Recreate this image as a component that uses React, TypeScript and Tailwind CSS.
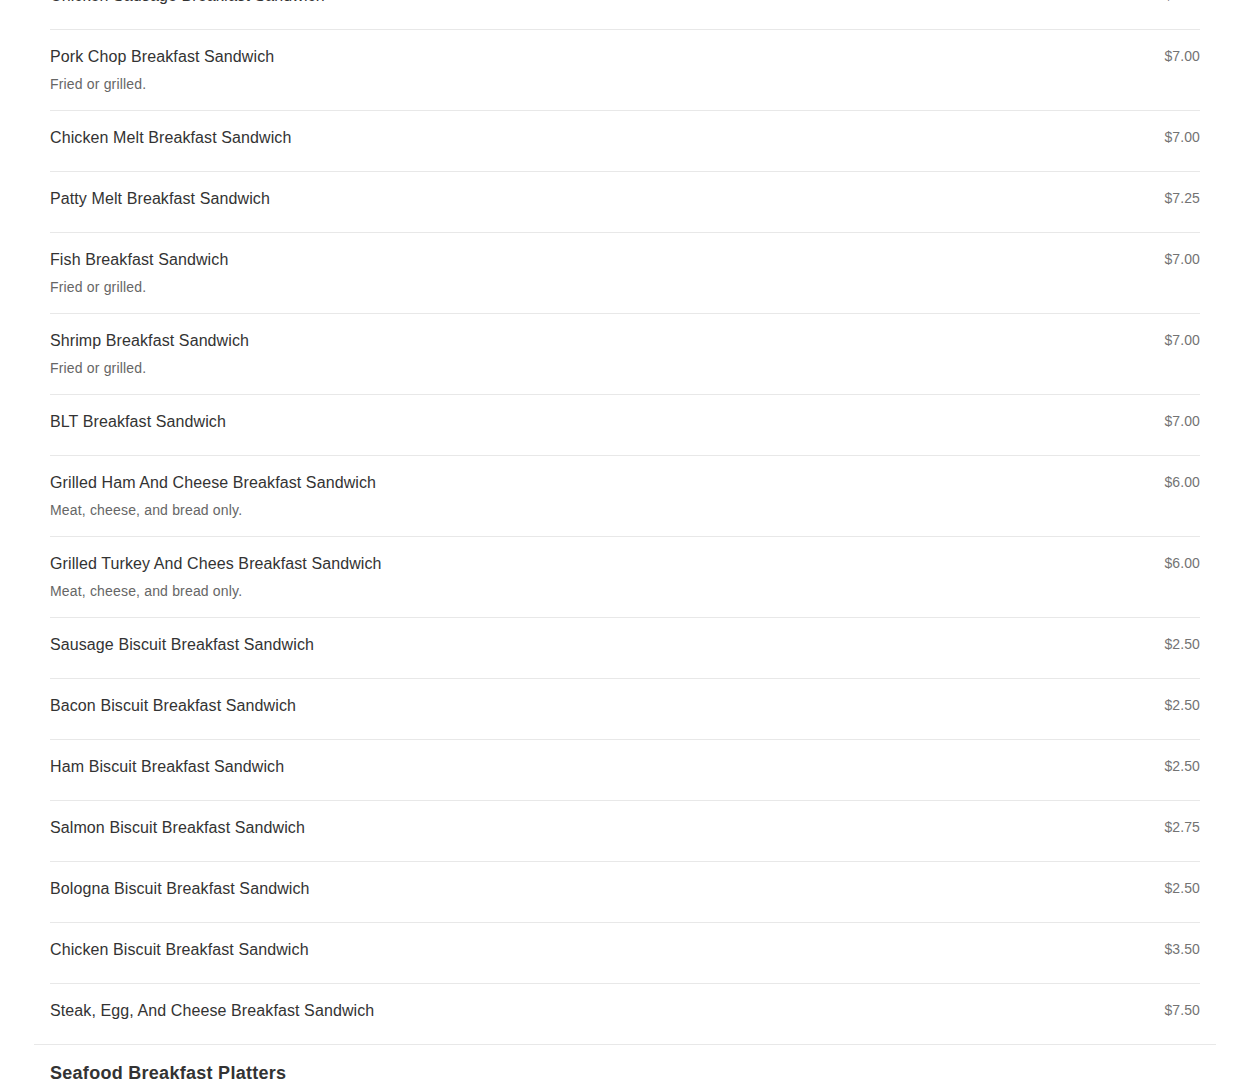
type Item = { name: string; price: string; desc?: string };

const grilled = "Fried or grilled.";
const plain = "Meat, cheese, and bread only.";

// Breakfast sandwiches (list is scrolled, first row sits above the fold)
const sandwiches: Item[] = [
  { name: "Chicken Sausage Breakfast Sandwich", price: "$7.00" },
  { name: "Pork Chop Breakfast Sandwich", price: "$7.00", desc: grilled },
  { name: "Chicken Melt Breakfast Sandwich", price: "$7.00" },
  { name: "Patty Melt Breakfast Sandwich", price: "$7.25" },
  { name: "Fish Breakfast Sandwich", price: "$7.00", desc: grilled },
  { name: "Shrimp Breakfast Sandwich", price: "$7.00", desc: grilled },
  { name: "BLT Breakfast Sandwich", price: "$7.00" },
  { name: "Grilled Ham And Cheese Breakfast Sandwich", price: "$6.00", desc: plain },
  { name: "Grilled Turkey And Chees Breakfast Sandwich", price: "$6.00", desc: plain },
  { name: "Sausage Biscuit Breakfast Sandwich", price: "$2.50" },
  { name: "Bacon Biscuit Breakfast Sandwich", price: "$2.50" },
  { name: "Ham Biscuit Breakfast Sandwich", price: "$2.50" },
  { name: "Salmon Biscuit Breakfast Sandwich", price: "$2.75" },
  { name: "Bologna Biscuit Breakfast Sandwich", price: "$2.50" },
  { name: "Chicken Biscuit Breakfast Sandwich", price: "$3.50" },
  { name: "Steak, Egg, And Cheese Breakfast Sandwich", price: "$7.50" },
];

function MenuRow({ item, last }: { item: Item; last: boolean }) {
  return (
    <div
      className={`flex items-start justify-between pt-[16px] pb-[16px] ${
        last ? "min-h-[60px]" : "min-h-[61px] border-b border-[#e8e8e8]"
      }`}
    >
      <div>
        <div className="text-[16px] leading-[22px] tracking-[0.1px] text-[#333333]">{item.name}</div>
        {item.desc && (
          <div className="mt-[6px] text-[14px] leading-[20px] tracking-[0.17px] text-[#666666]">{item.desc}</div>
        )}
      </div>
      <div className="text-[14px] leading-[20px] tracking-[0.1px] text-[#737373]">{item.price}</div>
    </div>
  );
}

export default function App() {
  return (
    <div
      className="min-h-screen overflow-hidden bg-white px-[34px]"
      style={{ fontFamily: '"Liberation Sans", Arial, sans-serif' }}
    >
      <section className="-mt-[31px] border-b border-[#e8e8e8] px-4">
        {sandwiches.map((item, i) => (
          <MenuRow key={i} item={item} last={i === sandwiches.length - 1} />
        ))}
      </section>

      {/* Next section */}
      <section className="px-4 pt-[16px]">
        <h2 className="text-[18px] leading-[24px] font-bold tracking-[0.28px] text-[#333333]">
          Seafood Breakfast Platters
        </h2>
        <div className="h-[200px]" />
      </section>
    </div>
  );
}
